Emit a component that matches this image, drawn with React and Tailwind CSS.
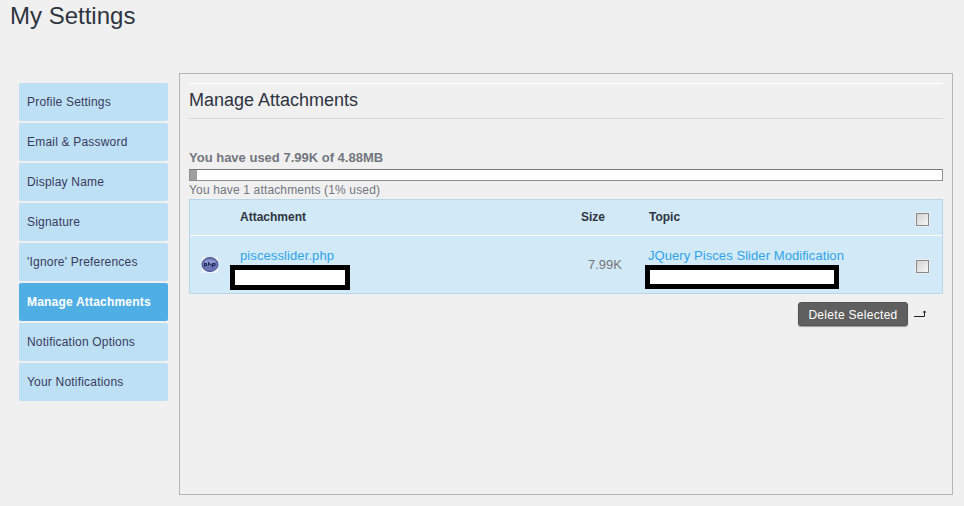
const tabs = [
  "Profile Settings",
  "Email & Password",
  "Display Name",
  "Signature",
  "'Ignore' Preferences",
  "Manage Attachments",
  "Notification Options",
  "Your Notifications",
];

function PhpIcon() {
  return (
    <svg width="18" height="18" viewBox="0 0 18 18">
      <rect x="1" y="1" width="16" height="16" fill="#eef1f6" />
      <ellipse cx="9" cy="8.5" rx="8" ry="7" fill="#6a74b4" stroke="#4a5390" />
      <ellipse cx="9" cy="6" rx="5.5" ry="2.5" fill="#8d96cc" />
      <path d="M3.5 10.5V7.5h2v2h-2M7.5 6v3.5M7.5 8h2.5v1.5M11.5 11.5V7.5h2.5v2h-2.5" fill="none" stroke="#1e2352" strokeWidth="1" />
    </svg>
  );
}

function Checkbox() {
  return <span className="block w-[13px] h-[13px] border border-[#8a8a8a] bg-[linear-gradient(135deg,#d4d4d4,#f6f6f6)] outline outline-1 outline-[#e8eef2]" />;
}

function RedactBox({ className }) {
  return <div className={`bg-white border-[5px] border-black ${className}`} />;
}

export default function App() {
  return (
    <div className="h-[506px] w-[964px] overflow-hidden bg-[#f0f0f0] font-['Liberation_Sans',Arial,sans-serif]">
      <h1 className="h-[73px] pl-[10px] pt-[2px] text-[24px] leading-[28px] text-[#2e3440]">My Settings</h1>

      <div className="flex">
        <ul className="ml-[19px] mt-[10px] w-[149px] flex flex-col gap-[2px]">
          {tabs.map(t => (
            <li
              key={t}
              className={`h-[38px] flex items-center pl-2 rounded-[2px] text-[12px] tracking-[0.2px] ${t === "Manage Attachments" ? "bg-[#4fafe5] text-white font-bold" : "bg-[#bde0f5] text-[#3a3a5c]"}`}
            >
              {t}
            </li>
          ))}
        </ul>

        <main className="ml-[11px] w-[774px] h-[422px] border border-[#b4b4b4] px-[9px] pt-[9px]">
          <div className="h-[36px] border-t border-t-white border-b border-b-[#d8d8d8]">
            <h2 className="pt-[6px] text-[18px] leading-[20px] text-[#2e3440]">Manage Attachments</h2>
          </div>

          <p className="mt-[31px] text-[13px] leading-[16px] font-bold text-[#72767f]">You have used 7.99K of 4.88MB</p>
          <div className="mt-[3px] mb-[1px] h-[12px] bg-white border border-[#8f8f8f] border-t-[#777]">
            <div className="h-full w-[7px] bg-[#a0a0a0]" />
          </div>
          <p className="text-[12px] leading-[16px] tracking-[0.15px] text-[#72767f]">You have 1 attachments (1% used)</p>

          <div className="mt-[1px] border border-[#b7d6e9] bg-[#d2e9f7] text-[12px]">
            <div className="flex h-[36px] pb-[2px] items-center font-bold text-[#2e3440] border-b border-b-white">
              <div className="w-[50px]" />
              <div className="w-[330px]">Attachment</div>
              <div className="w-[78px] pl-[11px]">Size</div>
              <div className="flex-1 pl-[1px]">Topic</div>
              <div className="mr-[13px] mt-[5px]"><Checkbox /></div>
            </div>
            <div className="flex h-[57px] items-center">
              <div className="w-[50px] pl-[11px] pt-[1px]"><PhpIcon /></div>
              <div className="w-[330px] self-start pt-[12px]">
                <a className="block text-[13px] leading-[16px] text-[#2fa4e7] tracking-[0.1px]">piscesslider.php</a>
                <RedactBox className="w-[120px] h-[25px] mt-[1px] -ml-[10px]" />
              </div>
              <div className="w-[78px] pr-[26px] text-right text-[13px] text-[#777]">7.99K</div>
              <div className="flex-1 self-start pt-[12px]">
                <a className="block text-[13px] leading-[16px] text-[#2fa4e7] tracking-[0.07px]">JQuery Pisces Slider Modification</a>
                <RedactBox className="w-[194px] h-[24px] mt-[1px] -ml-[3px]" />
              </div>
              <div className="mr-[13px] mt-[4px]"><Checkbox /></div>
            </div>
          </div>

          <div className="mt-[8px] flex items-center justify-end pr-[15px]">
            <button className="h-[24px] w-[110px] pt-[1px] rounded-[3px] border border-[#555] bg-[#5f5f5f] text-[12px] tracking-[0.3px] text-white shadow-[0_1px_1px_#999]">Delete Selected</button>
            <svg className="ml-[5px]" width="15" height="10" viewBox="0 0 15 10">
              <path d="M1 7.5H11.5V2.5" fill="none" stroke="#222" strokeWidth="1" />
              <path d="M9.5 3.5L11.5 1.5L13.5 3.5Z" fill="#222" />
            </svg>
          </div>
        </main>
      </div>
    </div>
  );
}
